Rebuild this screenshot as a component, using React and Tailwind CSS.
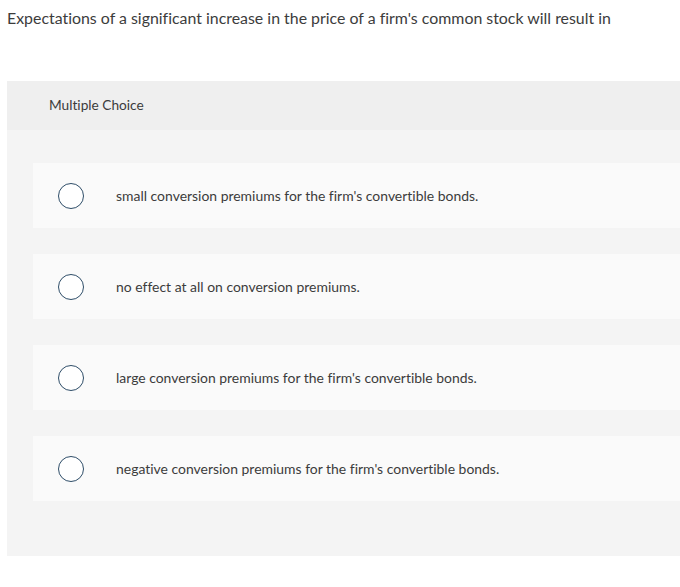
import React from "react";

const choices = [
  "small conversion premiums for the firm's convertible bonds.",
  "no effect at all on conversion premiums.",
  "large conversion premiums for the firm's convertible bonds.",
  "negative conversion premiums for the firm's convertible bonds.",
];

const App = () => {
  return (
    <div className="w-[680px] h-[587px] bg-white text-[#3c3c3c] font-['Lato',sans-serif] [font-variant-ligatures:none]">
      <p className="pl-[7px] pt-[8px] text-[15.9px] leading-[20px]">
        Expectations of a significant increase in the price of a firm's common stock will result in
      </p>

      <div className="ml-[7px] mt-[53px] bg-[#f4f4f4]">
        <div className="h-[49px] bg-[#efefef] flex items-center pl-[42px] text-[13.7px]">
          Multiple Choice
        </div>
        <div className="pt-[33px] pb-[55px] pl-[26px] flex flex-col gap-[26px]">
          {choices.map((text) => (
            <div key={text} className="h-[65px] bg-[#fafafa] flex items-center">
              <span className="ml-[25px] w-[26px] h-[26px] rounded-full border-[1.5px] border-[#2e4d68] bg-white" />
              <span className="ml-[32px] text-[13.95px] pt-px">{text}</span>
            </div>
          ))}
        </div>
      </div>
    </div>
  );
};

export default App;
